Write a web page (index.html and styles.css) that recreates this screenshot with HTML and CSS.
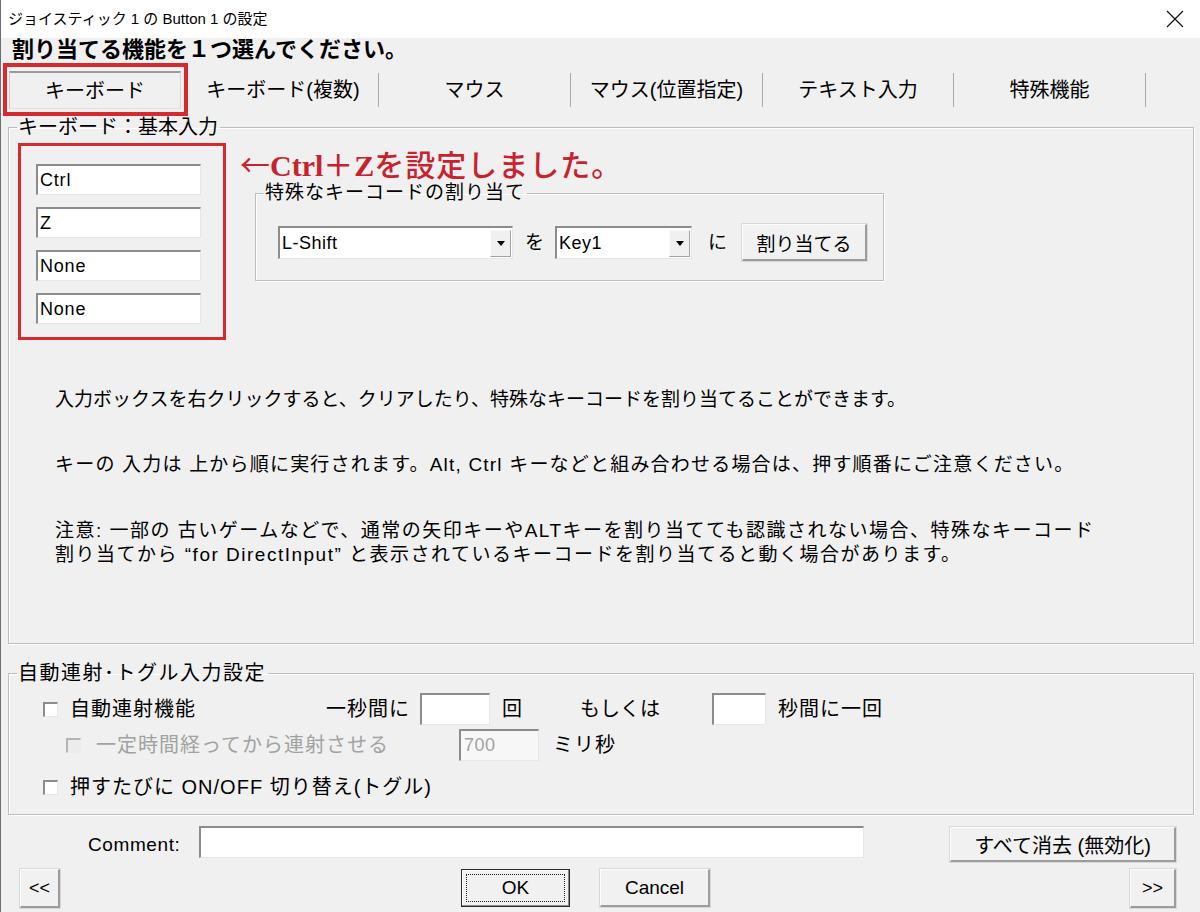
FILE: index.html
```html
<!DOCTYPE html>
<html lang="ja">
<head>
<meta charset="utf-8">
<title>ジョイスティック 1 の Button 1 の設定</title>
<link rel="stylesheet" href="styles.css">
</head>
<body>
<div class="window">
  <div class="titlebar">
    <span class="title">ジョイスティック 1 の Button 1 の設定</span>
    <svg class="close" width="18" height="18" viewBox="0 0 18 18"><path d="M1 1L17 17M17 1L1 17" stroke="#111" stroke-width="1.2" fill="none"/></svg>
  </div>

  <div class="heading">割り当てる機能を１つ選んでください。</div>

  <div class="tabs">
    <div class="tab-mark"><div class="tab-active">キーボード</div></div>
    <div class="tab w191">キーボード(複数)</div>
    <div class="tab w192">マウス</div>
    <div class="tab w192">マウス(位置指定)</div>
    <div class="tab w191">テキスト入力</div>
    <div class="tab w192">特殊機能</div>
  </div>

  <fieldset class="group group-main">
    <legend>キーボード：基本入力</legend>
    <div class="main-top">
      <div class="mark-box">
        <div class="textbox key">Ctrl</div>
        <div class="textbox key">Z</div>
        <div class="textbox key">None</div>
        <div class="textbox key">None</div>
      </div>
      <div class="right-col">
        <div class="annotation"><span class="ann-arrow">←</span><span class="ann-latin">Ctrl</span><span class="ann-jp">＋</span><span class="ann-latin">Z</span><span class="ann-jp">を設定しました。</span></div>
        <fieldset class="group group-special">
          <legend>特殊なキーコードの割り当て</legend>
          <div class="assign-row">
            <div class="combo combo-wide"><span class="combo-text">L-Shift</span><span class="drop"><svg width="8" height="5" viewBox="0 0 8 5"><polygon points="0,0 8,0 4,5" fill="#000"/></svg></span></div>
            <span class="particle wo">を</span>
            <div class="combo combo-narrow"><span class="combo-text">Key1</span><span class="drop"><svg width="8" height="5" viewBox="0 0 8 5"><polygon points="0,0 8,0 4,5" fill="#000"/></svg></span></div>
            <span class="particle ni">に</span>
            <div class="btn btn-assign">割り当てる</div>
          </div>
        </fieldset>
      </div>
    </div>
    <p class="note note1">入力ボックスを右クリックすると、クリアしたり、特殊なキーコードを割り当てることができます。</p>
    <p class="note note2">キーの 入力は 上から順に実行されます。Alt, Ctrl キーなどと組み合わせる場合は、押す順番にご注意ください。</p>
    <p class="note note3">注意: 一部の 古いゲームなどで、通常の矢印キーやALTキーを割り当てても認識されない場合、特殊なキーコード<br>割り当てから “for DirectInput” と表示されているキーコードを割り当てると動く場合があります。</p>
  </fieldset>

  <fieldset class="group group-auto">
    <legend>自動連射･トグル入力設定</legend>
    <div class="opt-row row1">
      <span class="check"></span>
      <span class="lbl l-auto">自動連射機能</span>
      <span class="lbl l-persec">一秒間に</span>
      <div class="textbox in-count"></div>
      <span class="lbl l-kai">回</span>
      <span class="lbl l-or">もしくは</span>
      <div class="textbox in-sec"></div>
      <span class="lbl l-secper">秒間に一回</span>
    </div>
    <div class="opt-row row2">
      <span class="check disabled"></span>
      <span class="lbl l-delay dim">一定時間経ってから連射させる</span>
      <div class="textbox in-ms disabled-box">700</div>
      <span class="lbl l-ms">ミリ秒</span>
    </div>
    <div class="opt-row row3">
      <span class="check"></span>
      <span class="lbl l-toggle">押すたびに ON/OFF 切り替え(トグル)</span>
    </div>
  </fieldset>

  <div class="comment-row">
    <span class="comment-label">Comment:</span>
    <div class="textbox comment-box"></div>
    <div class="btn btn-clear">すべて消去 (無効化)</div>
  </div>

  <div class="bottom-row">
    <div class="btn btn-prev">&lt;&lt;</div>
    <div class="btn btn-ok"><span class="focus">OK</span></div>
    <div class="btn btn-cancel">Cancel</div>
    <div class="btn btn-next">&gt;&gt;</div>
  </div>
</div>
</body>
</html>
```

FILE: styles.css
```css
html, body {
  margin: 0;
  padding: 0;
}

body {
  width: 1200px;
  height: 912px;
  overflow: hidden;
  background: #f0f0f0;
}

.window {
  width: 1200px;
  height: 912px;
  background: #f0f0f0;
  box-shadow: inset 1px 0 0 #6f6f6f;
  font-family: "Liberation Sans", "Noto Sans CJK JP", sans-serif;
  color: #000;
  display: flex;
  flex-direction: column;
}

/* title bar */
.titlebar {
  height: 38px;
  flex: none;
  background: #fff;
  display: flex;
  align-items: center;
  justify-content: space-between;
  padding: 0 16px 0 8px;
  box-shadow: inset 1px 0 0 #6f6f6f;
}

.title {
  font-size: 15px;
  line-height: 20px;
}

.close {
  display: block;
}

/* heading */
.heading {
  height: 25px;
  padding-left: 12px;
  font-size: 22px;
  line-height: 22px;
  font-weight: bold;
  padding-top: 1px;
  box-sizing: border-box;
  flex: none;
}

/* tabs */
.tabs {
  display: flex;
  height: 53px;
  flex: none;
}

.tab-mark {
  margin-left: 3px;
  width: 185px;
  height: 53px;
  border: 4px solid #d42a30;
  box-sizing: border-box;
  padding: 4px 3px 3px 2px;
}

.tab-active {
  height: 100%;
  box-sizing: border-box;
  border-style: solid;
  border-width: 2px 1px 1px 1px;
  border-color: #9a9a9a #d6d6d6 #e2e2e2 #c8c8c8;
  font-size: 20px;
  line-height: 36px;
  text-align: center;
}

.tab {
  margin-top: 10px;
  height: 34px;
  border-right: 1px solid #a8a8a8;
  box-sizing: border-box;
  font-size: 20px;
  line-height: 34px;
  text-align: center;
}

.w191 { width: 191px; }
.w192 { width: 192px; }

/* group boxes */
.group {
  margin: 0;
  padding: 0;
  min-width: 0;
  border: 1px solid #bdbdbd;
  box-shadow: inset 1px 1px 0 #fff, 1px 1px 0 #fff;
  box-sizing: border-box;
}

.group > legend {
  padding: 0 2px 0 1px;
  margin-left: 8px;
  font-size: 20px;
  line-height: 20px;
}

.group-main {
  margin: 1px 0 0 8px;
  width: 1186px;
  padding: 6px 0 76px 0;
}

.main-top {
  display: flex;
  align-items: flex-start;
}

.mark-box {
  margin-left: 9px;
  width: 208px;
  height: 197px;
  border: 3px solid #d42a30;
  box-sizing: border-box;
  padding: 18px 0 0 15px;
  display: flex;
  flex-direction: column;
  gap: 12px;
}

.textbox {
  background: #fff;
  border-style: solid;
  border-width: 2px 1px 1px 2px;
  border-color: #8c8c8c #e6e6e6 #e6e6e6 #8c8c8c;
  box-sizing: border-box;
  height: 32px;
}

.key {
  width: 165px;
  height: 31px;
  font-size: 18px;
  letter-spacing: 0.8px;
  line-height: 28px;
  padding-left: 2px;
}

.right-col {
  margin-left: 14px;
  display: flex;
  flex-direction: column;
}

.annotation {
  margin-top: 3px;
  height: 34px;
  font-size: 30px;
  line-height: 34px;
  color: #c8222e;
  white-space: nowrap;
  overflow: visible;
}

.ann-arrow {
  font-family: "Noto Sans CJK JP", sans-serif;
  font-weight: normal;
}

.ann-latin {
  font-family: "Liberation Serif", serif;
  font-weight: bold;
}

.ann-jp {
  font-family: "Noto Sans CJK JP", sans-serif;
  font-weight: 500;
  letter-spacing: 1px;
}

.group-special {
  margin: 3px 0 0 15px;
  width: 629px;
  padding: 21px 0 19px 0;
}

.group-special > legend {
  font-size: 19px;
  letter-spacing: 1px;
  margin-left: 8px;
}

.assign-row {
  display: flex;
  align-items: center;
  padding-left: 22px;
}

.combo {
  height: 33px;
  background: #fff;
  border-style: solid;
  border-width: 2px 1px 1px 2px;
  border-color: #8c8c8c #e6e6e6 #e6e6e6 #8c8c8c;
  box-sizing: border-box;
  display: flex;
  align-items: center;
  justify-content: space-between;
  padding: 1px 1px 1px 2px;
}

.combo-wide { width: 235px; }
.combo-narrow { width: 137px; }

.combo-text {
  font-size: 18px;
  letter-spacing: 0.5px;
}

.drop {
  width: 21px;
  height: 27px;
  box-sizing: border-box;
  background: #f0f0f0;
  border-style: solid;
  border-width: 1px;
  border-color: #fafafa #a0a0a0 #a0a0a0 #fafafa;
  display: flex;
  align-items: center;
  justify-content: center;
}

.drop svg { display: block; }

.particle {
  font-size: 19px;
  line-height: 24px;
}

.wo { margin: 0 11px 0 12px; }
.ni { margin: 0 15px 0 16px; }

.btn {
  background: #f1f1f1;
  border-style: solid;
  border-width: 1px 2px 2px 1px;
  border-color: #fdfdfd #9c9c9c #9c9c9c #fdfdfd;
  box-shadow: 0 0 0 1px #d8d8d8;
  box-sizing: border-box;
  display: flex;
  align-items: center;
  justify-content: center;
  font-size: 19px;
}

.btn-assign {
  width: 125px;
  height: 37px;
}

.note {
  margin: 0 0 0 46px;
  font-size: 19px;
  line-height: 24px;
  white-space: nowrap;
}

.note1 { margin-top: 48px; }
.note2 { margin-top: 41px; letter-spacing: 1.2px; }
.note3 { margin-top: 42px; letter-spacing: 1.5px; }

/* auto-fire group */
.group-auto {
  margin: 19px 0 0 8px;
  width: 1186px;
  padding: 10px 0 11px 0;
}

.group-auto > legend {
  letter-spacing: 1.5px;
}

.opt-row {
  display: flex;
  align-items: center;
  height: 32px;
}

.row1 { padding-left: 34px; }
.row2 { padding-left: 57px; margin-top: 4px; }
.row3 { padding-left: 34px; margin-top: 10px; }

.check {
  width: 15px;
  height: 15px;
  flex: none;
  background: #fff;
  border-style: solid;
  border-width: 2px 1px 1px 2px;
  border-color: #8c8c8c #e6e6e6 #e6e6e6 #8c8c8c;
  box-sizing: border-box;
  margin-right: 12px;
}

.check.disabled {
  background: #ececec;
  border-color: #b4b4b4 #ececec #ececec #b4b4b4;
  margin-right: 15px;
}

.lbl {
  font-size: 20px;
  line-height: 24px;
  letter-spacing: 1px;
  white-space: nowrap;
  flex: none;
}

.dim { color: #a2a2a2; }

.l-auto { width: 256px; }
.l-persec { width: 94px; }
.in-count { width: 70px; flex: none; }
.l-kai { margin-left: 12px; width: 78px; }
.l-or { width: 132px; letter-spacing: 0; }
.in-sec { width: 54px; flex: none; }
.l-secper { margin-left: 12px; }

.l-delay { width: 363px; }
.in-ms {
  width: 80px;
  flex: none;
  font-size: 18px;
  line-height: 28px;
  padding-left: 3px;
  letter-spacing: 0.5px;
}
.disabled-box {
  background: #f7f7f7;
  color: #a2a2a2;
}
.l-ms { margin-left: 14px; }

/* comment row */
.comment-row {
  display: flex;
  align-items: flex-start;
  margin-top: 11px;
  height: 36px;
  flex: none;
}

.comment-label {
  margin: 3px 0 0 88px;
  width: 111px;
  font-size: 19px;
  line-height: 32px;
  letter-spacing: 0.6px;
}

.comment-box {
  width: 665px;
  height: 32px;
  flex: none;
}

.btn-clear {
  margin: 1px 0 0 86px;
  width: 226px;
  height: 35px;
  font-size: 20px;
}

/* bottom row */
.bottom-row {
  display: flex;
  align-items: flex-start;
  margin-top: 7px;
  padding-right: 24px;
  flex: none;
}

.btn-prev {
  margin-left: 20px;
  width: 40px;
  height: 39px;
  font-size: 18px;
}

.btn-ok {
  margin-left: 401px;
  width: 109px;
  height: 38px;
  border: 1px solid #2a2a2a;
  box-shadow: inset -1px -1px 0 #8a8a8a, inset 1px 1px 0 #fff;
  padding: 4px;
}

.btn-ok .focus {
  width: 100%;
  height: 100%;
  box-sizing: border-box;
  border: 1px dotted #222;
  display: flex;
  align-items: center;
  justify-content: center;
  font-size: 19px;
}

.btn-cancel {
  margin-left: 30px;
  width: 110px;
  height: 38px;
}

.btn-next {
  margin-left: auto;
  width: 46px;
  height: 39px;
  font-size: 18px;
}
```
